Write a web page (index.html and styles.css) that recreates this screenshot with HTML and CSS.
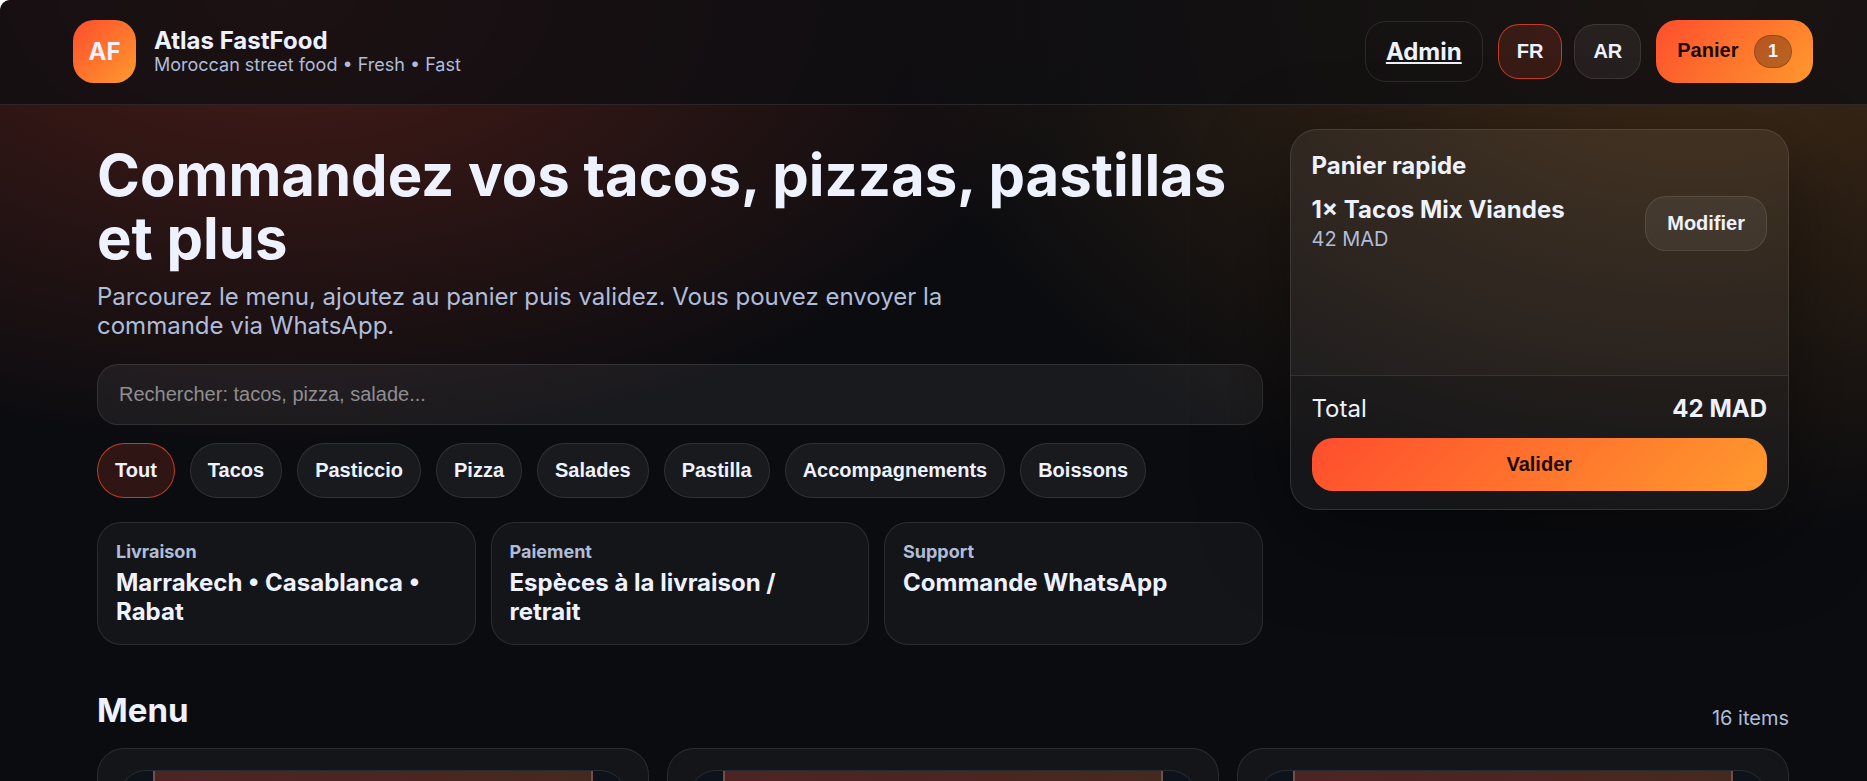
FILE: index.html
```html
<!DOCTYPE html>
<html lang="fr">
<head>
    <meta charset="UTF-8">
    <meta name="viewport" content="width=device-width, initial-scale=1.0">
    <title>Atlas FastFood</title>
    <link rel="stylesheet" href="styles.css">
</head>
<body>

    <header class="topbar">
        <div class="brand">
            <div class="logo">AF</div>
            <div>
                <div class="brand-name">Atlas FastFood</div>
                <div class="brand-sub">Moroccan street food • Fresh • Fast</div>
            </div>
        </div>
        <nav class="actions">
            <a class="admin-link" href="#admin">Admin</a>
            <div class="lang">
                <button class="button active" type="button">FR</button>
                <button class="button" type="button">AR</button>
            </div>
            <button class="button cart-button" type="button">Panier <span class="badge">1</span></button>
        </nav>
    </header>

    <main class="container">
        <section class="hero">
            <div class="hero-left">
                <h1>Commandez vos tacos, pizzas, pastillas et plus</h1>
                <p class="lead">Parcourez le menu, ajoutez au panier puis validez. Vous pouvez envoyer la commande via WhatsApp.</p>

                <input type="search" id="search" class="input" placeholder="Rechercher: tacos, pizza, salade..." aria-label="Rechercher">

                <div class="chips">
                    <button class="button chip active" type="button">Tout</button>
                    <button class="button chip" type="button">Tacos</button>
                    <button class="button chip" type="button">Pasticcio</button>
                    <button class="button chip" type="button">Pizza</button>
                    <button class="button chip" type="button">Salades</button>
                    <button class="button chip" type="button">Pastilla</button>
                    <button class="button chip" type="button">Accompagnements</button>
                    <button class="button chip" type="button">Boissons</button>
                </div>

                <div class="infos">
                    <div class="info">
                        <div class="info-label">Livraison</div>
                        <div class="info-value">Marrakech • Casablanca • Rabat</div>
                    </div>
                    <div class="info">
                        <div class="info-label">Paiement</div>
                        <div class="info-value">Espèces à la livraison / retrait</div>
                    </div>
                    <div class="info">
                        <div class="info-label">Support</div>
                        <div class="info-value">Commande WhatsApp</div>
                    </div>
                </div>
            </div>

            <aside class="quick-cart">
                <h2 class="quick-title">Panier rapide</h2>
                <div class="quick-list">
                    <div class="quick-item">
                        <div>
                            <div class="item-name">1× Tacos Mix Viandes</div>
                            <div class="muted">42 MAD</div>
                        </div>
                        <button class="button edit-button" type="button">Modifier</button>
                    </div>
                </div>
                <div class="quick-footer">
                    <div class="total">
                        <span>Total</span>
                        <strong>42 MAD</strong>
                    </div>
                    <button class="button primary" type="button">Valider</button>
                </div>
            </aside>
        </section>

        <section>
            <div class="menu-head">
                <h2>Menu</h2>
                <div class="muted">16 items</div>
            </div>
            <div class="menu-grid">
                <article class="card">
                    <div class="media"><div class="cover"></div></div>
                </article>
                <article class="card">
                    <div class="media"><div class="cover"></div></div>
                </article>
                <article class="card">
                    <div class="media"><div class="cover"></div></div>
                </article>
            </div>
        </section>
    </main>

</body>
</html>
```

FILE: styles.css
```css
:root {
    --bg: #0b0c10;
    --text: #eef2ff;
    --muted: #b0bdd9;
    --line: rgba(255, 255, 255, 0.1);
    --hot: linear-gradient(135deg, #ff4d2d, #ff9a2d);
}
* {
    box-sizing: border-box;
}
html {
    background: #fff;
}
body {
    margin: 0;
    min-height: 100vh;
    border-top-left-radius: 10px;
    font-family: Inter, "Liberation Sans", sans-serif;
    font-size: 24px;
    line-height: 29px;
    color: var(--text);
    background:
        radial-gradient(1350px 750px at 15% 0, rgba(255, 77, 45, 0.25), transparent 60%),
        radial-gradient(1350px 900px at 91% 0, rgba(255, 154, 45, 0.23), transparent 60%),
        var(--bg);
}
h1, h2, p {
    margin: 0;
}

/* Header */
.topbar {
    display: flex;
    justify-content: space-between;
    align-items: center;
    padding: 20px 54px 21px 73px;
    border-bottom: 1px solid var(--line);
    border-top-left-radius: 10px;
    background: rgba(14, 14, 17, 0.75);
}
.brand {
    display: flex;
    align-items: center;
    gap: 18px;
}
.logo {
    display: grid;
    place-items: center;
    width: 63px;
    height: 63px;
    border-radius: 21px;
    font-weight: 700;
    background: var(--hot);
}
.brand-name {
    line-height: 26px;
    font-weight: 700;
}
.brand-sub {
    font-size: 18px;
    line-height: 22px;
    color: var(--muted);
}
.actions {
    display: flex;
    align-items: center;
    gap: 15px;
}
.lang {
    display: flex;
    gap: 12px;
}
.admin-link {
    padding: 15px 20px;
    border: 1px solid var(--line);
    border-radius: 21px;
    font-weight: 700;
    color: var(--text);
}
.button {
    padding: 15px 18px;
    border: 1px solid var(--line);
    border-radius: 21px;
    font: 700 20px/23px "Liberation Sans", Arial, sans-serif;
    color: var(--text);
    background: rgba(255, 255, 255, 0.06);
    cursor: pointer;
}
.button.active {
    border-color: rgba(255, 77, 45, 0.7);
    background: rgba(255, 77, 45, 0.15);
}
.cart-button {
    padding: 15px 21px;
    border: none;
    color: #1a0b05;
    background: var(--hot);
}
.badge {
    display: inline-block;
    margin-left: 10px;
    padding: 5px 13px;
    border: 1px solid rgba(0, 0, 0, 0.2);
    border-radius: 999px;
    font-size: 18px;
    line-height: 21px;
    color: var(--text);
    background: rgba(0, 0, 0, 0.28);
}

/* Hero */
.container {
    padding: 24px 78px 60px 97px;
}
.hero {
    display: grid;
    grid-template-columns: 7fr 3fr;
    align-items: start;
    gap: 27px;
}
.hero-left {
    padding-top: 15px;
}
h1 {
    font-size: 58px;
    line-height: 63px;
    font-weight: 700;
}
.lead {
    max-width: 900px;
    margin-top: 12px;
    color: var(--muted);
}
.input {
    display: block;
    width: 100%;
    height: 61px;
    margin-top: 24px;
    padding: 0 21px;
    border: 1px solid var(--line);
    border-radius: 21px;
    font: 20px "Liberation Sans", Arial, sans-serif;
    color: var(--text);
    background: rgba(255, 255, 255, 0.06);
}
.input::placeholder {
    color: #8e8e91;
}
.chips {
    display: flex;
    flex-wrap: wrap;
    gap: 15px;
    margin-top: 18px;
}
.chip {
    padding: 15px 17px;
    border-radius: 999px;
}
.infos {
    display: grid;
    grid-template-columns: repeat(3, 1fr);
    gap: 15px;
    margin-top: 24px;
}
.info {
    padding: 18px;
    border: 1px solid var(--line);
    border-radius: 24px;
    background: rgba(255, 255, 255, 0.04);
}
.info-label {
    font-size: 18px;
    line-height: 22px;
    font-weight: 700;
    color: var(--muted);
}
.info-value {
    margin-top: 5px;
    font-weight: 700;
}

/* Quick cart */
.quick-cart {
    border: 1px solid var(--line);
    border-radius: 27px;
    background: rgba(255, 255, 255, 0.06);
    box-shadow: 0 27px 90px rgba(0, 0, 0, 0.45);
}
.quick-title {
    padding: 21px 21px 0;
    font-size: 24px;
    line-height: 29px;
    font-weight: 700;
}
.quick-list {
    min-height: 195px;
    padding: 15px 21px;
}
.quick-item {
    display: flex;
    justify-content: space-between;
    align-items: center;
}
.quick-item .muted {
    margin-top: 3px;
}
.item-name {
    font-weight: 700;
}
.edit-button {
    padding: 15px 21px;
}
.muted {
    font-size: 20px;
    line-height: 24px;
    color: var(--muted);
}
.quick-footer {
    padding: 18px 21px;
    border-top: 1px solid var(--line);
    border-radius: 0 0 27px 27px;
    background: rgba(0, 0, 0, 0.15);
}
.total {
    display: flex;
    justify-content: space-between;
    margin-bottom: 15px;
}
.primary {
    display: block;
    width: 100%;
    border: none;
    color: #1a0b05;
    background: var(--hot);
}

/* Menu */
.menu-head {
    display: flex;
    justify-content: space-between;
    align-items: flex-end;
    margin: 45px 0 18px;
}
.menu-head h2 {
    font-size: 33px;
    line-height: 40px;
}
.menu-grid {
    display: grid;
    grid-template-columns: repeat(3, 1fr);
    gap: 18px;
}
.card {
    padding: 21px;
    border: 1px solid var(--line);
    border-radius: 27px;
    background: rgba(255, 255, 255, 0.04);
}
.media {
    height: 240px;
    padding: 0 33px;
    border: 1px solid var(--line);
    border-radius: 27px;
    overflow: hidden;
    background: #0e121b;
}
.cover {
    height: 100%;
    border: solid rgba(255, 255, 255, 0.2);
    border-width: 0 2px;
    background: linear-gradient(90deg, #4e2422, #46291e);
}
```
